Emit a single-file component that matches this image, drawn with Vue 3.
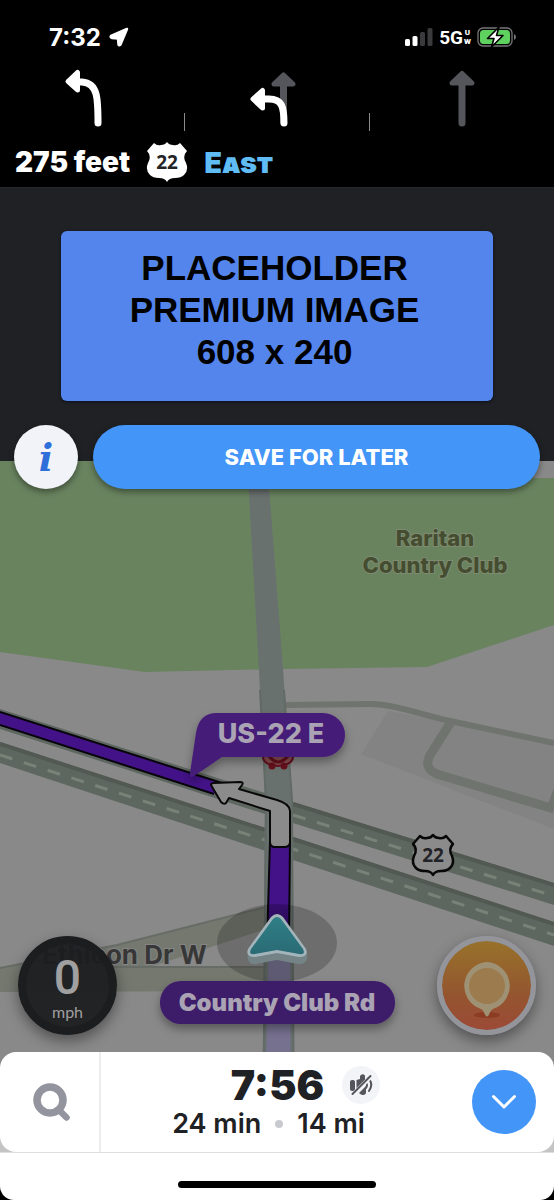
<template>
  <div class="nav-page">
    <header class="top">
      <div class="status">
        <div class="clock">
          <span>7:32</span>
          <svg width="20" height="20" viewBox="0 0 20 20" aria-hidden="true">
            <path d="M18 2L2 9Q1 10.500 3 11L9 11.500L9.500 17.500Q10 19 11.500 17.500Z" fill="#fff" stroke="#fff" stroke-width="2.500" stroke-linejoin="round" />
          </svg>
        </div>
        <div class="signals">
          <svg width="28" height="18" viewBox="0 0 28 18" aria-hidden="true">
            <rect x="0" y="11" width="5" height="7" rx="1.500" fill="#fff" />
            <rect x="7.500" y="8" width="5" height="10" rx="1.500" fill="#fff" />
            <rect x="15" y="4" width="5" height="14" rx="1.500" fill="#3a3a3c" />
            <rect x="22.500" y="0" width="5" height="18" rx="1.500" fill="#3a3a3c" />
          </svg>
          <span class="network">5G</span>
          <span class="band"><span>U</span><span>W</span></span>
          <svg class="battery" width="39" height="22" viewBox="0 0 39 22" aria-hidden="true">
            <rect x="1" y="2" width="34" height="18" rx="5" fill="none" stroke="#77777b" stroke-width="1.300" />
            <rect x="3" y="4" width="30" height="14" rx="3.500" fill="#5fd15f" />
            <path d="M37 8v6q2-1 2-3t-2-3z" fill="#77777b" />
            <path d="M22 1L10.500 12.500H17L14.500 21L26 9.500H19.500Z" fill="#fff" stroke="#000" stroke-width="1.600" stroke-linejoin="round" />
          </svg>
        </div>
      </div>

      <div class="lanes">
        <div class="lane">
          <svg width="60" height="60" viewBox="0 0 60 60" aria-label="Turn left">
            <path d="M36 55C36 31 36 15 20 14H14" fill="none" stroke="#fff" stroke-width="7" stroke-linecap="round" />
            <path d="M6 13.500L15.500 4.500V22Z" fill="#fff" stroke="#fff" stroke-width="5" stroke-linejoin="round" />
          </svg>
        </div>
        <span class="lane-line"></span>
        <div class="lane">
          <svg width="60" height="60" viewBox="0 0 60 60" aria-label="Turn left or go straight">
            <path d="M36.500 54V16" stroke="#55565b" stroke-width="7" stroke-linecap="round" />
            <path d="M36.500 7L46 16H27Z" fill="#55565b" stroke="#55565b" stroke-width="5" stroke-linejoin="round" />
            <path d="M37 55C37 39 35 31 22 31H14" fill="none" stroke="#fff" stroke-width="7" stroke-linecap="round" />
            <path d="M6 31L15.500 22.500V40Z" fill="#fff" stroke="#fff" stroke-width="5" stroke-linejoin="round" />
          </svg>
        </div>
        <span class="lane-line"></span>
        <div class="lane">
          <svg width="60" height="60" viewBox="0 0 60 60" aria-label="Go straight">
            <path d="M30 55V14" stroke="#55565b" stroke-width="7" stroke-linecap="round" />
            <path d="M30 5.500L40 15H20Z" fill="#55565b" stroke="#55565b" stroke-width="5" stroke-linejoin="round" />
          </svg>
        </div>
      </div>

      <div class="direction">
        <span>275 feet</span>
        <svg width="42" height="40" viewBox="0 0 42 40" aria-label="US 22">
          <path :d="shield" fill="#fff" />
          <text x="21" y="27" class="shield-text">22</text>
        </svg>
        <span class="heading">East</span>
      </div>
    </header>

    <section class="promo">
      <div class="banner">
        <span>PLACEHOLDER</span>
        <span>PREMIUM IMAGE</span>
        <span>608 x 240</span>
      </div>
      <div class="actions">
        <button class="info-btn" aria-label="Info">i</button>
        <button class="save-btn">SAVE FOR LATER</button>
      </div>
    </section>

    <main class="map">
      <svg class="map-canvas" viewBox="0 461 554 691" preserveAspectRatio="xMidYMin slice">
        <defs>
          <linearGradient id="route" x1="0" y1="0" x2="0" y2="1">
            <stop offset="0" stop-color="#431288" />
            <stop offset="0.600" stop-color="#431288" />
            <stop offset="1" stop-color="#2c0a5c" />
          </linearGradient>
          <linearGradient id="teal" x1="0" y1="0" x2="0" y2="1">
            <stop offset="0" stop-color="#2f7f86" />
            <stop offset="1" stop-color="#2a6b75" />
          </linearGradient>
          <filter id="shadow" x="-20%" y="-30%" width="140%" height="180%">
            <feDropShadow dx="0" dy="5" stdDeviation="5" flood-color="#000" flood-opacity="0.350" />
          </filter>
        </defs>
        <rect x="0" y="461" width="554" height="691" fill="#898989" />

        <!-- parks -->
        <path d="M0 461H530V478H554V625L427 667L283 669L145 672L0 652Z" fill="#69835f" />

        <!-- side streets -->
        <path d="M388 711L450 722L554 745V829L361 754Z" fill="#838384" />
        <g fill="none" stroke="#6f746e">
          <path d="M285 705L370 704C392 704 420 714 450 721L554 743" stroke-width="6" />
          <path d="M451 722L430 755Q423 768 437 774L554 809" stroke-width="9" />
          <path d="M556 790L549 808" stroke-width="5" />
        </g>
        <path d="M0 968L117 945L266 907V929L150 967H266V991L0 992Z" fill="#74786f" />
        <path d="M0 968L117 945L266 907M107 967H266" fill="none" stroke="#686c66" stroke-width="2" />

        <!-- highway -->
        <path d="M0 709L293 802L554 883V905L293 823L0 729Z" fill="#5d675f" />
        <path d="M0 742L293 837L554 922V946L293 860L0 763Z" fill="#5d675f" />
        <path d="M0 744L293 839L554 924M293 804L554 885" fill="none" stroke="#515952" stroke-width="4" />
        <path d="M0 755L293 849L554 935M293 815L554 896" fill="none" stroke="#7a8278" stroke-width="3" stroke-dasharray="13 12" />

        <!-- crossing road -->
        <path d="M247 461H267L283 669L292 800L294 1152H262L265 800L259 670Z" fill="#69716f" />
        <path d="M260 690L266 800L263 1152M284 690L292 800L294 1152" fill="none" stroke="#626a66" stroke-width="2" />

        <!-- route -->
        <path d="M269 940H290L291 1152H264Z" fill="#777190" />
        <path d="M0 712L224 784L214 794L0 725Z" fill="#431288" />
        <path d="M0 712L222 783M0 725L214 794" fill="none" stroke="#08040c" stroke-width="2" />
        <path d="M270 840L267 945H289L290 840Z" fill="url(#route)" stroke="#08040c" stroke-width="2" />
        <g class="car">
          <ellipse cx="278" cy="757" rx="15" ry="9" fill="#8f5053" stroke="#67111d" stroke-width="2" />
          <path d="M269 756Q278 768 288 756" fill="none" stroke="#67111d" stroke-width="3" />
          <circle cx="272" cy="766" r="3.500" fill="#67111d" />
          <circle cx="284" cy="766" r="3.500" fill="#67111d" />
        </g>
        <path d="M211 785Q211 783 214 783L240 782Q244 782 242 785L239 789L277 800Q290 804 290 811V842Q290 847 284 847H275Q270 847 270 842V811L229 798L226 803Q224 805 221 802Z" fill="#8b8b8b" stroke="#080808" stroke-width="2" stroke-linejoin="round" />

        <!-- labels -->
        <g class="park-name">
          <text x="435" y="546">Raritan</text>
          <text x="435" y="573">Country Club</text>
        </g>
        <text x="42" y="964" class="street-name">Ethicon Dr W</text>
        <g transform="translate(412 835)">
          <path :d="shield" fill="#8b8b8b" stroke="#080808" stroke-width="2.500" stroke-linejoin="round" />
          <text x="21" y="27" class="shield-text">22</text>
        </g>

        <!-- position -->
        <ellipse cx="277" cy="943" rx="60" ry="39" fill="#000" fill-opacity="0.200" />
        <path d="M271 918Q277 911 283 918L306 950Q308 953 307 959Q305 965 298 964L277 960L256 964Q249 965 248 959Q247 953 248 950Z" fill="#738386" />
        <path d="M271 917Q277 911 283 917L306 949Q309 957 299 957L277 953L255 957Q245 957 248 949Z" fill="#a3b5bb" />
        <path d="M273 919Q277 915 281 919L303 949Q306 955 299 954L277 950L255 954Q248 955 251 949Z" fill="url(#teal)" />

        <g filter="url(#shadow)">
          <path d="M217 713H323A22 22 0 0 1 323 757H222L194 776Q189 779 190 773L196 733Q199 713 217 713Z" fill="#451b78" />
          <rect x="160" y="981" width="235" height="43" rx="21" fill="#3e1a6b" />
        </g>
        <text x="271" y="743" class="road-name">US-22 E</text>
        <text x="277" y="1011" class="current-road">Country Club Rd</text>
      </svg>

      <div class="map-controls">
        <div class="speed">
          <span class="speed-value">0</span>
          <span class="speed-unit">mph</span>
        </div>
        <button class="report-btn" aria-label="Report">
          <svg width="88" height="88" viewBox="0 0 88 88" aria-hidden="true">
            <ellipse cx="44" cy="73" rx="13" ry="3" fill="#8c3c22" />
            <path d="M44 20a24 24 0 0 1 7 46.500q-3 1-4 4l-1.500 3q-1.500 2-3 0l-1.500-3q-1-3-4-4A24 24 0 0 1 44 20z" fill="#9f9274" />
            <circle cx="44" cy="44" r="18" fill="#9c7c4f" />
          </svg>
        </button>
      </div>

      <div class="sheet-wrap">
        <div class="sheet">
          <button class="search-btn" aria-label="Search">
            <svg width="40" height="40" viewBox="0 0 40 40" aria-hidden="true">
              <circle cx="20" cy="18" r="13" fill="none" stroke="#93949e" stroke-width="7.500" />
              <path d="M31 30L36.500 35.500" stroke="#93949e" stroke-width="6.500" stroke-linecap="round" />
            </svg>
          </button>
          <div class="eta">
            <div class="eta-top">
              <span class="arrival">7:56</span>
              <button class="mute-btn" aria-label="Sound off">
                <svg width="26" height="26" viewBox="0 0 26 26" aria-hidden="true">
                  <g fill="#55565d">
                    <rect x="2" y="8" width="5" height="11" rx="2" />
                    <path d="M8.500 8L12 7V4Q14 1 17 3.500V12L8.500 20Z" />
                    <path d="M18 14V21Q17 24 13 22.500L11 21Z" />
                  </g>
                  <path d="M20 6Q26 12 21 19M18 11Q20 13 18 16" fill="none" stroke="#55565d" stroke-width="2" stroke-linecap="round" />
                  <path d="M4 23.500L22.500 5" stroke="#f3f4f8" stroke-width="4" />
                  <path d="M4.500 22L22.500 4" stroke="#55565d" stroke-width="2" stroke-linecap="round" />
                </svg>
              </button>
            </div>
            <div class="eta-bottom">
              <span>24 min</span>
              <i class="dot"></i>
              <span>14 mi</span>
            </div>
          </div>
          <button class="expand-btn" aria-label="Expand">
            <svg width="26" height="16" viewBox="0 0 26 16" aria-hidden="true">
              <path d="M2.500 2.500L13 13L23.500 2.500" fill="none" stroke="#fff" stroke-width="3" stroke-linecap="round" stroke-linejoin="round" />
            </svg>
          </button>
        </div>
      </div>
    </main>

    <footer class="home-area">
      <div class="home-bar"></div>
    </footer>
  </div>
</template>

<script setup>
// US route shield, used in the header and on the map
const shield = 'M8 1Q11 4 15 3Q19 3 21 0Q23 3 27 3Q31 4 34 1L41 9Q36 14 40 21Q43 28 38 33Q35 36 29 36Q23 36 21 40Q19 36 13 36Q7 36 4 33Q-1 28 2 21Q6 14 1 9Z';
</script>

<style>
body {
  margin: 0;
  background: #000;
}
</style>

<style scoped>
.nav-page {
  display: flex;
  flex-direction: column;
  min-height: 100vh;
  background: #000;
  font-family: Inter, "Liberation Sans", sans-serif;
}

button {
  display: flex;
  align-items: center;
  justify-content: center;
  flex: none;
  margin: 0;
  padding: 0;
  border: none;
  cursor: pointer;
  font-family: inherit;
}

/* header */
.top {
  color: #fff;
  background: #000;
  border-bottom: 1px solid #28282b;
}

.status {
  display: flex;
  justify-content: space-between;
  align-items: center;
  height: 42px;
  padding: 16px 38px 8px 49px;
}

.clock {
  display: flex;
  align-items: center;
  gap: 8px;
  font-size: 24px;
  font-weight: 700;
}

.signals {
  display: flex;
  align-items: center;
}

.network {
  margin-left: 6px;
  font-family: Roboto, sans-serif;
  font-size: 19px;
  font-weight: 700;
}

.band {
  display: flex;
  flex-direction: column;
  align-items: center;
  margin-left: 1px;
  font-family: Roboto, sans-serif;
  font-size: 8px;
  line-height: 9px;
  font-weight: 900;
}

.battery {
  margin-left: 6px;
}

.lanes {
  display: flex;
  height: 65px;
}

.lane {
  flex: 1;
  display: flex;
  justify-content: center;
  padding-top: 2px;
}

.lane-line {
  width: 1px;
  height: 18px;
  align-self: flex-end;
  background: #8a8a8a;
}

.direction {
  display: flex;
  align-items: center;
  height: 50px;
  gap: 16px;
  padding: 6px 15px 0;
  font-size: 28px;
  font-weight: 900;
}

.direction svg {
  flex: none;
}

.heading {
  color: #5fbcf5;
  font-size: 29px;
  font-variant: small-caps;
}

.shield-text {
  fill: #222326;
  font-family: "Open Sans", sans-serif;
  font-size: 19px;
  font-weight: 700;
  text-anchor: middle;
}

/* promo */
.promo {
  position: relative;
  z-index: 2;
  padding: 43px 14px 0;
  background: #202124;
}

.banner {
  display: flex;
  flex-direction: column;
  align-items: center;
  height: 154px;
  margin: 0 47px;
  padding-top: 16px;
  border-radius: 6px;
  background: #5385ed;
  box-shadow: 0 1px 3px #08101f;
  color: #000;
  font-family: "Liberation Sans", Arial, sans-serif;
  font-size: 35px;
  font-weight: 700;
  line-height: 42px;
}

.banner span {
  padding-right: 5px;
}

.actions {
  display: flex;
  gap: 15px;
  padding-top: 24px;
  margin-bottom: -28px;
}

.info-btn,
.save-btn {
  height: 64px;
  border-radius: 32px;
  box-shadow: 0 3px 6px rgba(0, 0, 0, 0.4);
}

.info-btn {
  width: 64px;
  background: #f1f3f8;
  color: #2f6fd9;
  font-family: "DejaVu Serif", serif;
  font-size: 38px;
  font-style: italic;
  font-weight: 700;
}

.save-btn {
  flex: 1;
  background: #4395f8;
  color: #fff;
  font-size: 22px;
  font-weight: 800;
}

/* map */
.map {
  position: relative;
  flex: 1;
  display: flex;
  flex-direction: column;
  justify-content: flex-end;
  min-height: 690px;
  overflow: hidden;
  background: #898989;
}

.map-canvas {
  position: absolute;
  top: 0;
  left: 0;
  width: 100%;
  height: 100%;
}

.park-name {
  fill: #454d31;
  stroke: #7f8b70;
  stroke-width: 2px;
  paint-order: stroke;
  font-size: 22px;
  font-weight: 800;
  text-anchor: middle;
}

.street-name {
  fill: #373737;
  stroke: #858585;
  stroke-width: 2px;
  paint-order: stroke;
  font-size: 26px;
  font-weight: 700;
}

.road-name,
.current-road {
  fill: #aaa3b3;
  text-anchor: middle;
}

.road-name {
  font-size: 27px;
  font-weight: 800;
}

.current-road {
  font-size: 24px;
  font-weight: 900;
}

.map-controls {
  position: relative;
  display: flex;
  justify-content: space-between;
  align-items: center;
  padding: 0 18px 17px;
}

.speed,
.report-btn {
  display: flex;
  align-items: center;
  box-sizing: border-box;
  width: 99px;
  height: 99px;
  border-radius: 50%;
  box-shadow: 0 6px 14px rgba(0, 0, 0, 0.4);
}

.speed {
  flex-direction: column;
  padding-top: 10px;
  border: 8px solid #1c1d1f;
  background: rgba(28, 29, 31, 0.94);
  color: #a0a0a0;
}

.speed-value {
  font-family: Roboto, sans-serif;
  font-size: 48px;
  font-weight: 500;
  line-height: 48px;
}

.speed-unit {
  font-family: Lato, sans-serif;
  font-size: 16px;
  line-height: 20px;
}

.report-btn {
  background: linear-gradient(#97722b, #94552f 60%, #9c4a37) padding-box;
  border: 5px solid #94959b;
}

.sheet-wrap {
  position: relative;
  background: linear-gradient(transparent 70%, #c4c4c4 80%);
}

.sheet {
  display: flex;
  align-items: center;
  height: 100px;
  border-radius: 16px;
  background: #fff;
}

.search-btn {
  width: 101px;
  height: 100%;
  border-right: 2px solid #ededf0;
  border-radius: 16px 0 0 16px;
  background: none;
}

.eta {
  flex: 1;
  display: flex;
  flex-direction: column;
  align-items: center;
  color: #202124;
}

.eta-top {
  display: flex;
  align-items: center;
  gap: 18px;
  padding-left: 74px;
}

.arrival {
  font-size: 41px;
  font-weight: 900;
  line-height: 44px;
}

.mute-btn {
  width: 38px;
  height: 38px;
  border-radius: 50%;
  background: #f3f4f8;
}

.eta-bottom {
  display: flex;
  align-items: center;
  gap: 14px;
  font-size: 27px;
  font-weight: 600;
  line-height: 34px;
}

.dot {
  width: 8px;
  height: 8px;
  border-radius: 50%;
  background: #c8cacf;
}

.expand-btn {
  width: 64px;
  height: 64px;
  margin: 0 18px 0 36px;
  border-radius: 50%;
  background: #4395f8;
}

/* home indicator */
.home-area {
  display: flex;
  justify-content: center;
  align-items: flex-end;
  height: 48px;
  box-sizing: border-box;
  padding-bottom: 12px;
  border-top: 1px solid #dedede;
  border-radius: 0 0 14px 14px;
  background: #fff;
}

.home-bar {
  width: 198px;
  height: 7px;
  border-radius: 4px;
  background: #000;
}
</style>
